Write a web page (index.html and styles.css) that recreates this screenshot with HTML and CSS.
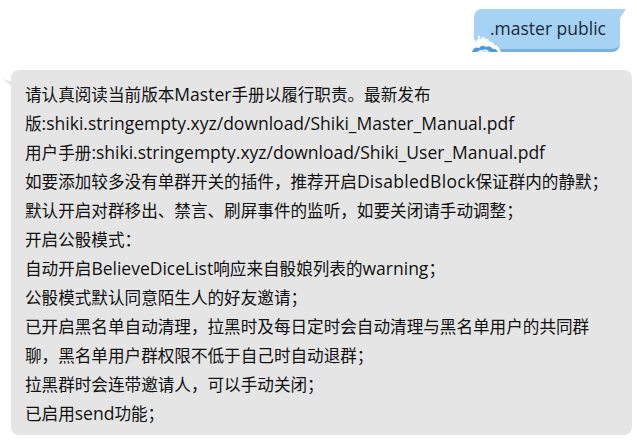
FILE: index.html
```html
<!DOCTYPE html>
<html lang="zh-CN">
<head>
<meta charset="utf-8">
<title>Chat</title>
<link rel="stylesheet" href="styles.css">
</head>
<body>
<div class="chat">
  <div class="row row-right">
    <div class="bubble-me">
      <span class="me-text">.master public</span>
      <svg class="cloud" width="32" height="18" viewBox="0 0 32 18">
        <path d="M0 18 L0 10 Q1 6 5 8 Q6 3 10 5 Q12 1 15 5 Q18 4 18 8 Q22 7 23 11 Q27 10 30 18 Z" fill="#ffffff"/>
        <path d="M1 18 Q3 12 8 14 Q11 10 15 13 Q19 11 22 15 Q25 14 27 18 Z" fill="#4f9bd6"/>
        <path d="M6 18 Q9 15 12 16 Q15 14 19 18 Z" fill="#d8ecfa"/>
        <circle cx="3" cy="7" r="1.5" fill="#ffffff"/>
        <circle cx="8" cy="3" r="1.2" fill="#ffffff"/>
      </svg>
    </div>
  </div>
  <div class="row row-left">
    <div class="bubble-bot">
      <div class="line">请认真阅读当前版本<span class="lat">Master</span>手册以履行职责。最新发布</div>
      <div class="line">版<span class="lat">:shiki.stringempty.xyz/download/Shiki_Master_Manual.pdf</span></div>
      <div class="line">用户手册<span class="lat">:shiki.stringempty.xyz/download/Shiki_User_Manual.pdf</span></div>
      <div class="line">如要添加较多没有单群开关的插件，推荐开启<span class="lat wide">DisabledBlock</span>保证群内的静默；</div>
      <div class="line">默认开启对群移出、禁言、刷屏事件的监听，如要关闭请手动调整；</div>
      <div class="line">开启公骰模式：</div>
      <div class="line">自动开启<span class="lat">BelieveDiceList</span>响应来自骰娘列表的<span class="lat">warning</span>；</div>
      <div class="line">公骰模式默认同意陌生人的好友邀请；</div>
      <div class="line">已开启黑名单自动清理，拉黑时及每日定时会自动清理与黑名单用户的共同群</div>
      <div class="line">聊，黑名单用户群权限不低于自己时自动退群；</div>
      <div class="line">拉黑群时会连带邀请人，可以手动关闭；</div>
      <div class="line">已启用<span class="lat">send</span>功能；</div>
    </div>
  </div>
</div>
</body>
</html>
```
FILE: styles.css
```css
html, body {
  margin: 0;
  padding: 0;
  background: #ffffff;
}
body {
  width: 637px;
  height: 443px;
  overflow: hidden;
  font-family: "Noto Sans CJK SC", sans-serif;
  font-size: 16.6px;
  color: #111111;
}
.lat {
  font-family: "Open Sans", "Noto Sans CJK SC", sans-serif;
  font-size: 17.5px;
}
.wide {
  letter-spacing: 0.3px;
}
.chat {
  display: flex;
  flex-direction: column;
  padding-top: 9px;
  gap: 18px;
}
.row {
  display: flex;
}
.row-right {
  justify-content: flex-end;
  padding-right: 17px;
}
.row-left {
  padding-left: 11px;
}
.bubble-me {
  position: relative;
  box-sizing: border-box;
  width: 146px;
  height: 43px;
  background: #a6d2f3;
  border-bottom: 3px solid #78b0de;
  border-radius: 8px;
  border-top-right-radius: 0;
  padding: 0 0 0 16px;
  display: flex;
  align-items: center;
  color: #1b2b3b;
  font-family: "Open Sans", sans-serif;
  font-size: 17.5px;
  line-height: 40px;
}
.bubble-me::after {
  content: "";
  position: absolute;
  top: 0;
  right: -6px;
  width: 6px;
  height: 9px;
  background: #a6d2f3;
  clip-path: polygon(0 0, 100% 0, 0 100%);
}
.me-text {
  position: relative;
  top: -1px;
}
.cloud {
  position: absolute;
  left: -3px;
  bottom: -3px;
}
.bubble-bot {
  position: relative;
  box-sizing: border-box;
  width: 621px;
  height: 365px;
  background: #e5e5e5;
  border-radius: 8px;
  padding: 10px 0 0 14px;
}
.bubble-bot::before {
  content: "";
  position: absolute;
  left: -8px;
  top: 9px;
  width: 9px;
  height: 8px;
  background: #e5e5e5;
  clip-path: polygon(0 0, 100% 35%, 100% 100%);
}
.line {
  line-height: 29px;
  height: 29px;
  white-space: nowrap;
}
```
